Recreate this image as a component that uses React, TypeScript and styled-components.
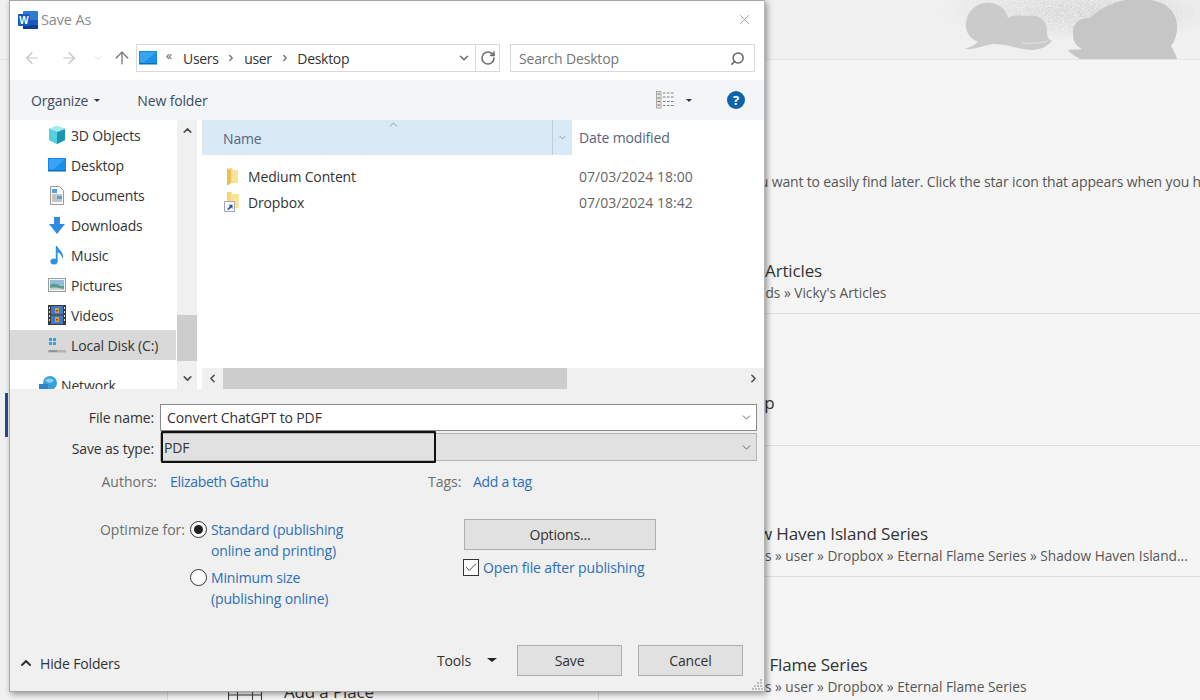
import React from "react";
import styled, { createGlobalStyle } from "styled-components";
import { ArrowLeft, ArrowRight, ArrowUp, ChevronDown, ChevronUp, ChevronLeft, ChevronRight, RotateCw, Search, X, Check } from "lucide-react";

const FONT = `"Open Sans", "Noto Sans", "Liberation Sans", sans-serif`;

const Global = createGlobalStyle`
  html, body { margin: 0; padding: 0; width: 1200px; height: 700px; overflow: hidden; background: #f5f5f5; }
  * { box-sizing: border-box; }
  body { font-family: ${FONT}; font-size: 14px; letter-spacing: -0.15px; color: #333; }
`;

/* ---------- Backstage behind the dialog ---------- */
const Page = styled.div`
  position: relative;
  width: 1200px;
  height: 700px;
  overflow: hidden;
  display: grid;
  grid-template-columns: 168px 431px 1fr;
  grid-template-rows: 60px 1fr;
  background: #f5f5f5;
`;
const Banner = styled.header`
  grid-column: 1 / 4;
  background: #f0f0f0;
  border-bottom: 1px solid #e4e4e4;
  display: flex;
  justify-content: flex-end;
  overflow: hidden;
`;
const NavColumn = styled.nav`
  border-right: 1px solid #d9d9d9;
  padding-top: 333px;
  padding-left: 5px;
  background: #f0f0f0;
`;
const NavAccent = styled.div`
  width: 3px;
  height: 44px;
  background: #1f4e8c;
`;
const PlacesColumn = styled.section`
  border-right: 1px solid #d9d9d9;
  padding: 620px 0 0 60px;
  display: flex;
  gap: 21px;
  align-items: flex-start;
  svg { margin-top: 12px; flex: none; }
`;
const PlaceLabel = styled.span`
  font-size: 17px;
  line-height: 24px;
  color: #333;
  white-space: nowrap;
`;
const FilesColumn = styled.section`
  display: flex;
  flex-direction: column;
  overflow: hidden;
`;
const Intro = styled.p`
  margin: 0;
  height: 133px;
  flex: none;
  padding: 111px 0 0 93px;
  font-size: 14px;
  line-height: 22px;
  color: #555;
  white-space: nowrap;
`;
const FileRow = styled.div<{ $h: number; $pad?: number }>`
  height: ${(p) => p.$h}px;
  flex: none;
  border-bottom: 1px solid #dcdcdc;
  padding-left: 111px;
  display: flex;
  flex-direction: column;
  justify-content: flex-end;
  padding-bottom: ${(p) => p.$pad ?? 10}px;
  white-space: nowrap;
`;
const FileTitle = styled.div`
  font-size: 17px;
  line-height: 24px;
  color: #333;
`;
const FilePath = styled.div`
  font-size: 13.7px;
  line-height: 20px;
  letter-spacing: 0;
  margin-left: -1px;
  color: #555;
`;

/* ---------- Dialog window ---------- */
const Dialog = styled.div`
  position: absolute;
  left: 9px;
  top: 0;
  width: 756px;
  height: 692px;
  background: #fff;
  border: 1px solid #a6a6a6;
  border-right-color: #b5b5b5;
  box-shadow: 2px 2px 6px rgba(0, 0, 0, 0.4);
  display: flex;
  flex-direction: column;
`;
const TitleBar = styled.div`
  height: 39px;
  flex: none;
  display: flex;
  align-items: center;
  padding: 0 11px 2px 8px;
  gap: 3px;
`;
const TitleText = styled.span`
  font-size: 14.5px;
  color: #8c8c8c;
  flex: 1;
`;
const NavBar = styled.div`
  height: 40px;
  flex: none;
  display: flex;
  align-items: flex-start;
  padding: 4px 9px 0 0;
`;
const NavButtons = styled.div`
  width: 126px;
  height: 28px;
  flex: none;
  display: flex;
  align-items: center;
  padding-left: 13px;
  color: #c4c4c4;
`;
const NavGap = styled.span<{ $w: number }>`
  display: block;
  width: ${(p) => p.$w}px;
  flex: none;
`;
const Address = styled.div`
  width: 364px;
  height: 28px;
  flex: none;
  border: 1px solid #d9d9d9;
  display: flex;
  align-items: center;
  padding-left: 2px;
  color: #333;
`;
const Crumb = styled.span`
  font-size: 14px;
  letter-spacing: -0.3px;
  color: #333;
`;
const CrumbSep = styled.span`
  display: flex;
  width: 25.5px;
  justify-content: center;
  color: #6d6d6d;
`;
const Chevrons = styled.span`
  font-size: 12px;
  line-height: 12px;
  color: #555;
  width: 26px;
  padding-left: 9px;
  margin-top: -5px;
`;
const AddressEnd = styled.div`
  margin-left: auto;
  height: 100%;
  display: flex;
  align-items: center;
  color: #6e6e6e;
`;
const RefreshCell = styled.div`
  width: 24px;
  height: 100%;
  border-left: 1px solid #d9d9d9;
  margin-left: 4px;
  display: flex;
  align-items: center;
  justify-content: center;
`;
const SearchBox = styled.div`
  width: 245px;
  height: 28px;
  flex: none;
  margin-left: 10px;
  border: 1px solid #d9d9d9;
  display: flex;
  align-items: center;
  justify-content: space-between;
  padding: 0 9px 0 8px;
  font-size: 14px;
  color: #757575;
  svg { transform: scaleX(-1); color: #666; }
`;
const Toolbar = styled.div`
  height: 40px;
  flex: none;
  background: #f4f5f7;
  display: flex;
  align-items: center;
  padding: 0 19px 0 21px;
  font-size: 14px;
  color: #3b4c63;
`;
const ToolbarItem = styled.span`
  display: flex;
  align-items: center;
  gap: 6px;
  margin-right: 37px;
`;
const Caret = styled.span<{ $color?: string; $w?: number }>`
  display: inline-block;
  width: 0;
  height: 0;
  border-left: ${(p) => p.$w ?? 3.5}px solid transparent;
  border-right: ${(p) => p.$w ?? 3.5}px solid transparent;
  border-top: ${(p) => (p.$w ?? 3.5) * 0.9}px solid ${(p) => p.$color ?? "#2a3a55"};
`;
const ToolbarEnd = styled.div`
  margin-left: auto;
  display: flex;
  align-items: center;
`;
const HelpBadge = styled.span`
  width: 18px;
  height: 18px;
  border-radius: 50%;
  background: #0f62ac;
  color: #fff;
  font-size: 13px;
  font-weight: 700;
  line-height: 18px;
  text-align: center;
  margin-left: 35px;
`;

/* ---------- Browser pane ---------- */
const Pane = styled.div`
  height: 269px;
  flex: none;
  display: flex;
`;
const Sidebar = styled.div`
  width: 167px;
  flex: none;
  overflow: hidden;
`;
const SideItem = styled.div<{ $selected?: boolean; $net?: boolean }>`
  height: 30px;
  display: flex;
  align-items: center;
  gap: ${(p) => (p.$net ? 4 : 5)}px;
  padding-left: ${(p) => (p.$net ? 29 : 38)}px;
  margin-top: ${(p) => (p.$net ? 10 : 0)}px;
  width: 166px;
  background: ${(p) => (p.$selected ? "#d9d9d9" : "transparent")};
  font-size: 14px;
  color: #333;
  white-space: nowrap;
`;
const IconSlot = styled.span`
  width: 18px;
  flex: none;
  display: flex;
  justify-content: center;
  align-items: center;
`;
const VScroll = styled.div`
  width: 20px;
  flex: none;
  background: #f0f0f0;
  display: flex;
  flex-direction: column;
  align-items: center;
  color: #505050;
`;
const VArrow = styled.div`
  height: 21px;
  display: flex;
  align-items: center;
  justify-content: center;
  flex: none;
`;
const VTrack = styled.div`
  flex: 1;
  width: 100%;
  padding-top: 174px;
`;
const VThumb = styled.div`
  height: 46px;
  background: #cdcdcd;
`;
const Main = styled.div`
  margin-left: 5px;
  flex: 1;
  display: flex;
  flex-direction: column;
  min-width: 0;
`;
const HeaderRow = styled.div`
  height: 35px;
  flex: none;
  display: flex;
  position: relative;
  font-size: 14px;
  color: #56657e;
`;
const NameHead = styled.div`
  width: 350px;
  background: #d9e9f6;
  padding: 9px 0 0 21px;
`;
const HeadDrop = styled.div`
  width: 20px;
  background: #d9e9f6;
  border-left: 1px solid #b9cfe2;
  display: flex;
  align-items: center;
  justify-content: center;
  color: #5b6f86;
`;
const DateHead = styled.div`
  padding: 8px 0 0 7px;
`;
const SortMark = styled.span`
  position: absolute;
  left: 185px;
  top: -2px;
  display: flex;
  color: #7d8794;
`;
const FileList = styled.div`
  flex: 1;
  padding-top: 9px;
`;
const ListRow = styled.div`
  height: 25.5px;
  display: grid;
  grid-template-columns: 377px 1fr;
  align-items: center;
`;
const NameCell = styled.div`
  display: flex;
  align-items: center;
  padding-left: 22px;
  font-size: 14px;
  color: #333;
`;
const FileIconSlot = styled.span`
  width: 24px;
  flex: none;
  display: flex;
`;
const DateCell = styled.div`
  font-size: 14px;
  letter-spacing: 0;
  color: #666;
`;
const HScroll = styled.div`
  height: 21px;
  flex: none;
  display: flex;
  background: #f0f0f0;
  color: #505050;
`;
const HArrow = styled.div`
  width: 21px;
  flex: none;
  display: flex;
  align-items: center;
  justify-content: center;
`;
const HTrack = styled.div`
  flex: 1;
`;
const HThumb = styled.div`
  width: 344px;
  height: 100%;
  background: #cdcdcd;
`;

/* ---------- Form ---------- */
const Lower = styled.div`
  flex: 1;
  background: #f0f0f0;
  display: flex;
  flex-direction: column;
  position: relative;
  padding-top: 15px;
`;
const FieldRow = styled.div<{ $gap?: number }>`
  display: flex;
  align-items: center;
  margin-top: ${(p) => p.$gap ?? 0}px;
  padding-right: 7px;
`;
const FieldLabel = styled.label<{ $shift?: number }>`
  width: 144px;
  margin-right: 6px;
  padding-top: ${(p) => p.$shift ?? 0}px;
  text-align: right;
  font-size: 14px;
  color: #333;
  flex: none;
`;
const Field = styled.div<{ $shaded?: boolean }>`
  flex: 1;
  position: relative;
  height: ${(p) => (p.$shaded ? 28 : 27)}px;
  background: ${(p) => (p.$shaded ? "#e1e1e1" : "#fff")};
  border: 1px solid ${(p) => (p.$shaded ? "#b4b4b4" : "#8a8a8a")};
  display: flex;
  align-items: center;
  justify-content: space-between;
  padding: ${(p) => (p.$shaded ? 1 : 0)}px 3px 0 ${(p) => (p.$shaded ? 3 : 6)}px;
  font-size: 14px;
  color: #333;
  svg { color: #505050; }
`;
const Highlight = styled.span`
  position: absolute;
  left: 0;
  top: -3px;
  width: 275px;
  height: 32px;
  border: 2px solid #111;
  border-radius: 1px;
`;
const MetaRow = styled.div`
  display: grid;
  grid-template-columns: 147px 271px 45px 1fr;
  margin-top: 10px;
  height: 20px;
  align-items: center;
  font-size: 14px;
`;
const MetaLabel = styled.span<{ $right?: boolean }>`
  color: #6d6d6d;
  letter-spacing: 0;
  text-align: ${(p) => (p.$right ? "right" : "left")};
`;
const MetaValue = styled.span<{ $indent?: number }>`
  color: #2b6fb8;
  letter-spacing: -0.3px;
  padding-left: ${(p) => p.$indent ?? 0}px;
`;
const OptionsArea = styled.div`
  display: grid;
  grid-template-columns: 454px 1fr;
  margin-top: 28px;
`;
const OptimizeGroup = styled.div`
  display: flex;
  align-items: flex-start;
`;
const OptimizeLabel = styled.span`
  width: 175px;
  flex: none;
  text-align: right;
  font-size: 14px;
  line-height: 21px;
  letter-spacing: 0;
  color: #6d6d6d;
`;
const RadioList = styled.div`
  margin-left: 5px;
  display: flex;
  flex-direction: column;
  gap: 6px;
`;
const RadioItem = styled.div`
  display: flex;
  gap: 4px;
  align-items: flex-start;
  font-size: 14px;
  line-height: 21px;
  color: #2b6fb8;
`;
const Radio = styled.span<{ $on?: boolean }>`
  width: 17px;
  height: 17px;
  margin-top: 2px;
  border-radius: 50%;
  border: 1px solid #333;
  background: #fff;
  display: flex;
  align-items: center;
  justify-content: center;
  flex: none;
  &::after {
    content: "";
    display: ${(p) => (p.$on ? "block" : "none")};
    width: 9px;
    height: 9px;
    border-radius: 50%;
    background: #222;
  }
`;
const ActionColumn = styled.div`
  display: flex;
  flex-direction: column;
  align-items: flex-start;
`;
const DialogButton = styled.button<{ $w: number }>`
  width: ${(p) => p.$w}px;
  height: 31px;
  padding: 0;
  background: #e1e1e1;
  border: 1px solid #adadad;
  font-family: ${FONT};
  font-size: 14px;
  letter-spacing: -0.15px;
  color: #333;
`;
const CheckRow = styled.div`
  display: flex;
  align-items: center;
  gap: 4px;
  margin-top: 8px;
  margin-left: -1px;
  font-size: 14px;
  color: #2b6fb8;
`;
const CheckBox = styled.span`
  width: 16px;
  height: 17px;
  border: 1px solid #333;
  background: #fff;
  display: flex;
  align-items: center;
  justify-content: center;
  color: #333;
`;
const Footer = styled.div`
  margin-top: auto;
  height: 30px;
  margin-bottom: 16px;
  padding: 0 21px 0 8px;
  display: flex;
  align-items: center;
  font-size: 14px;
  color: #333;
`;
const HideFolders = styled.span`
  display: flex;
  align-items: center;
  gap: 6px;
  margin-top: 6px;
  color: #333;
`;
const ToolsGroup = styled.div`
  margin-left: auto;
  display: flex;
  align-items: center;
`;
const ToolsMenu = styled.span`
  display: flex;
  align-items: center;
  gap: 16px;
  margin-right: 20px;
`;
const Grip = styled.span`
  position: absolute;
  right: 1px;
  bottom: 1px;
  display: flex;
`;

/* ---------- Drawn icons ---------- */
const WordIcon = () => (
  <svg width="20" height="20" viewBox="0 0 20 20">
    <rect x="5" y="1" width="15" height="18" rx="1" fill="#2b7cd3" />
    <rect x="5" y="10" width="15" height="5" fill="#185abd" />
    <rect x="5" y="15" width="15" height="4" fill="#103f91" />
    <rect x="0" y="4" width="12" height="12" rx="1" fill="#185abd" />
    <text x="6" y="13.500" fontSize="10" fontWeight="700" fontFamily="Liberation Sans, sans-serif" fill="#fff" textAnchor="middle">W</text>
  </svg>
);
const MonitorIcon = () => (
  <svg width="18" height="14" viewBox="0 0 18 14">
    <rect x="0" y="0" width="18" height="13" fill="#1287e6" />
    <rect x="1" y="1" width="16" height="10.5" fill="#3ba4f2" />
    <path d="M17 1v10.500H5z" fill="#1a90ea" />
    <rect x="0" y="12" width="18" height="1.500" fill="#0c6cc0" />
  </svg>
);
const CubeIcon = () => (
  <svg width="18" height="18" viewBox="0 0 18 18">
    <path d="M9 0l8 3v11l-8 4-8-4V3z" fill="#44c7d8" />
    <path d="M9 6l8-3v11l-8 4z" fill="#1f94b0" />
    <path d="M9 0l8 3-8 3-8-3z" fill="#a5e8ef" />
    <path d="M1 3l8 3v12l-8-4z" fill="#52d1dc" />
  </svg>
);
const DocIcon = () => (
  <svg width="14" height="19" viewBox="0 0 14 19">
    <path d="M.5.5h9l4 4v14H.5z" fill="#f8f8f8" stroke="#9a9a9a" />
    <rect x="2" y="3" width="5" height="4" fill="#5aa0dc" />
    <path d="M2 9h10M2 11h10M2 13h10M2 15h10" stroke="#8f8f8f" strokeWidth="1" />
    <rect x="7" y="10" width="5" height="3" fill="#5aa0dc" />
  </svg>
);
const DownIcon = () => (
  <svg width="16" height="17" viewBox="0 0 16 17">
    <path d="M5 0h6v7h5l-8 10L0 7h5z" fill="#2f8ae0" />
  </svg>
);
const MusicIcon = () => (
  <svg width="14" height="19" viewBox="0 0 14 19">
    <ellipse cx="4" cy="15.500" rx="3.600" ry="3" fill="#2a93e4" />
    <path d="M5.800 0h1.500c.3 3 5.700 5 5.700 10.300 0 1-.3 2-.8 2.800.2-3.500-2.900-6-4.600-7V15.500H5.800z" fill="#2a93e4" />
  </svg>
);
const PictureIcon = () => (
  <svg width="18" height="14" viewBox="0 0 18 14">
    <rect x=".5" y=".5" width="17" height="13" fill="#f6f6f6" stroke="#9b9b9b" />
    <rect x="2" y="2" width="14" height="5" fill="#8fbddf" />
    <path d="M2 7c3-2 6-1 9 0s4 .5 5 0v5H2z" fill="#5d9a8c" />
    <path d="M2 10c4-1 9 0 14 1v1H2z" fill="#c5d6cf" />
  </svg>
);
const FilmIcon = () => (
  <svg width="18" height="20" viewBox="0 0 18 20">
    <rect width="18" height="20" fill="#3a3a3a" />
    <rect x="3" y="1" width="12" height="8.500" fill="#3f77c9" />
    <rect x="3" y="10.500" width="12" height="8.500" fill="#3f77c9" />
    <path d="M7 3h4v5H7zM7 12h4v5H7z" fill="#d5a429" />
    <path d="M8 5h2v1.500H8zM8 14h2v1.500H8z" fill="#b63b2d" />
    <path d="M1 2h1v2H1zM1 6h1v2H1zM1 10h1v2H1zM1 14h1v2H1zM16 2h1v2h-1zM16 6h1v2h-1zM16 10h1v2h-1zM16 14h1v2h-1z" fill="#ddd" />
  </svg>
);
const DiskIcon = () => (
  <svg width="18" height="16" viewBox="0 0 18 16">
    <path d="M1 1h3v3H1zM5 1h3v3H5zM1 5h3v3H1zM5 5h3v3H5z" fill="#27a9e5" />
    <path d="M0 13l4-4h10l4 4v2.500H0z" fill="#d8d8d8" />
    <path d="M0 13h18v2.500H0z" fill="#b3b3b3" />
    <rect x="1" y="13.500" width="8" height="1" fill="#777" />
  </svg>
);
const NetworkIcon = () => (
  <svg width="18" height="18" viewBox="0 0 18 18">
    <circle cx="11" cy="7" r="7" fill="#3aa0d8" />
    <path d="M6 4c3-2 6-2 9 0-1 3-7 4-9 0z" fill="#8fd0ef" />
    <rect x="0" y="8" width="9" height="8" fill="#2f82c9" />
  </svg>
);
const FolderIcon = () => (
  <svg width="15" height="17" viewBox="0 0 15 17">
    <path d="M3 1l1-.8h4l1 1.800h5v13H6l-2 2-1-.5z" fill="#f9d878" />
    <path d="M7 2h7v13H7z" fill="#fbe39a" />
    <path d="M3 1l4 1v13l-3 2h-1z" fill="#efc04f" />
  </svg>
);
const ShortcutIcon = () => (
  <svg width="16" height="20" viewBox="0 0 16 20">
    <path d="M3 0h4l1 2h6.500v14H6l-2 2-1-.5z" fill="#f7d676" />
    <path d="M7 2h7.500v14H7z" fill="#fbe39a" />
    <rect x=".5" y="9.500" width="10" height="10" fill="#fafafa" stroke="#a8a8a8" />
    <path d="M3 17.500l3-3.500-1.500-1.200H8.500V17l-1.200-1.400L5 17.800z" fill="#1a56b0" />
  </svg>
);
const ViewIcon = () => (
  <svg width="18" height="18" viewBox="0 0 18 18" fill="none">
    <rect x=".5" y=".5" width="4.500" height="16.500" fill="#e8e8e8" stroke="#a8a8a8" />
    <path d="M1.500 3h2.500M1.500 7h2.500" stroke="#666" />
    <path d="M1.500 10.500h2.500" stroke="#c0392b" />
    <path d="M1.500 14h2.500" stroke="#666" />
    <path d="M7 2h2.500M11 2h2.500M15 2h2.500M7 6h2.500M11 6h2.500M15 6h2.500M7 10.500h2.500M11 10.500h2.500M15 10.500h2.500M7 14.500h2.500M11 14.500h2.500M15 14.500h2.500" stroke="#7d7d7d" />
  </svg>
);
const PlaceIcon = () => (
  <svg width="35" height="8" viewBox="0 0 35 8" fill="none" stroke="#444" strokeWidth="1.100">
    <path d="M.5 0v8M9.500 0v8M24.500 0v8M33.500 0v8M.5 3h33" />
  </svg>
);
const GripIcon = () => (
  <svg width="11" height="11" viewBox="0 0 11 11" fill="#bdbdbd">
    <path d="M8 0h2v2H8zM5 3h2v2H5zM8 3h2v2H8zM2 6h2v2H2zM5 6h2v2H5zM8 6h2v2H8zM0 9h2v2H0zM3 9h2v2H3zM6 9h2v2H6zM9 9h2v2H9z" />
  </svg>
);
const BannerArt = () => (
  <svg width="290" height="59" viewBox="910 0 290 59">
    <defs>
      <radialGradient id="glow" cx="0.6" cy="0.2" r="0.5">
        <stop offset="0" stopColor="#d4d4d4" />
        <stop offset="0.6" stopColor="#e2e2e2" />
        <stop offset="1" stopColor="#f0f0f0" />
      </radialGradient>
      <filter id="grain" x="0" y="0" width="100%" height="100%" colorInterpolationFilters="sRGB">
        <feTurbulence type="fractalNoise" baseFrequency="1.1" numOctaves="2" seed="4" />
        <feColorMatrix values="0 0 0 0 0.941  0 0 0 0 0.941  0 0 0 0 0.941  3 0 0 0 -1.2" />
      </filter>
    </defs>
    <rect x="910" y="0" width="290" height="59" fill="url(#glow)" />
    <rect x="910" y="0" width="290" height="59" filter="url(#grain)" />
    <path d="M978 42C968 38 965 30 966 22C968 8 980 1 992 3C1001 5 1006 10 1008 18C1014 14 1022 16 1027 16C1038 14 1047 20 1047 30C1047 34 1046 38 1052 41C1048 46 1040 50 1032 50C1020 50 1005 43 993 44C984 45 975 50 965 49C970 47 975 45 978 42Z" fill="#cbcbcb" />
    <path d="M1022 43C1032 44 1042 43 1048 41" stroke="#e2e2e2" strokeWidth="1.200" fill="none" />
    <path d="M1073 35C1072 24 1078 18 1090 18C1098 10 1110 3 1125 0L1150 0C1168 2 1178 14 1177 28C1177 36 1174 42 1171 46C1173 50 1176 54 1177 59L1080 59C1075 56 1070 53 1068 50C1072 49 1078 50 1082 49C1076 46 1073 41 1073 35Z" fill="#c6c6c6" />
  </svg>
);

const places = [
  { icon: <CubeIcon />, label: "3D Objects" },
  { icon: <MonitorIcon />, label: "Desktop" },
  { icon: <DocIcon />, label: "Documents" },
  { icon: <DownIcon />, label: "Downloads" },
  { icon: <MusicIcon />, label: "Music" },
  { icon: <PictureIcon />, label: "Pictures" },
  { icon: <FilmIcon />, label: "Videos" },
];

export default function App() {
  return (
    <Page>
      <Global />
      <Banner>
        <BannerArt />
      </Banner>
      <NavColumn>
        <NavAccent />
      </NavColumn>
      <PlacesColumn>
        <PlaceIcon />
        <PlaceLabel>Add a Place</PlaceLabel>
      </PlacesColumn>
      <FilesColumn>
        <Intro>Pin files you want to easily find later. Click the star icon that appears when you hover over a file.</Intro>
        <FileRow $h={121}>
          <FileTitle>Vicky's Articles</FileTitle>
          <FilePath>Downloads » Vicky's Articles</FilePath>
        </FileRow>
        <FileRow $h={132} $pad={30}>
          <FileTitle>Desktop</FileTitle>
        </FileRow>
        <FileRow $h={131}>
          <FileTitle>Shadow Haven Island Series</FileTitle>
          <FilePath>C: » Users » user » Dropbox » Eternal Flame Series » Shadow Haven Island...</FilePath>
        </FileRow>
        <FileRow $h={131}>
          <FileTitle>Eternal Flame Series</FileTitle>
          <FilePath>C: » Users » user » Dropbox » Eternal Flame Series</FilePath>
        </FileRow>
      </FilesColumn>

      <Dialog>
        <TitleBar>
          <WordIcon />
          <TitleText>Save As</TitleText>
          <X size={17} strokeWidth={1} color="#8a8a8a" />
        </TitleBar>
        <NavBar>
          <NavButtons>
            <ArrowLeft size={18} strokeWidth={1.6} />
            <NavGap $w={19} />
            <ArrowRight size={18} strokeWidth={1.6} />
            <NavGap $w={15} />
            <ChevronDown size={10} strokeWidth={1.6} />
            <NavGap $w={9} />
            <ArrowUp size={20} strokeWidth={1.4} color="#666" />
          </NavButtons>
          <Address>
            <MonitorIcon />
            <Chevrons>«</Chevrons>
            <Crumb>Users</Crumb>
            <CrumbSep><ChevronRight size={10} strokeWidth={3} /></CrumbSep>
            <Crumb>user</Crumb>
            <CrumbSep><ChevronRight size={10} strokeWidth={3} /></CrumbSep>
            <Crumb>Desktop</Crumb>
            <AddressEnd>
              <ChevronDown size={14} strokeWidth={2.6} />
              <RefreshCell><RotateCw size={16} strokeWidth={2.4} /></RefreshCell>
            </AddressEnd>
          </Address>
          <SearchBox>
            Search Desktop
            <Search size={15} strokeWidth={2.4} />
          </SearchBox>
        </NavBar>
        <Toolbar>
          <ToolbarItem>Organize <Caret /></ToolbarItem>
          <ToolbarItem>New folder</ToolbarItem>
          <ToolbarEnd>
            <ViewIcon />
            <NavGap $w={12} />
            <Caret />
            <HelpBadge>?</HelpBadge>
          </ToolbarEnd>
        </Toolbar>
        <Pane>
          <Sidebar>
            {places.map((p) => (
              <SideItem key={p.label}><IconSlot>{p.icon}</IconSlot>{p.label}</SideItem>
            ))}
            <SideItem $selected><IconSlot><DiskIcon /></IconSlot>Local Disk (C:)</SideItem>
            <SideItem $net><IconSlot><NetworkIcon /></IconSlot>Network</SideItem>
          </Sidebar>
          <VScroll>
            <VArrow><ChevronUp size={13} strokeWidth={3} /></VArrow>
            <VTrack><VThumb /></VTrack>
            <VArrow><ChevronDown size={13} strokeWidth={3} /></VArrow>
          </VScroll>
          <Main>
            <HeaderRow>
              <NameHead>Name</NameHead>
              <HeadDrop><ChevronDown size={11} strokeWidth={1.4} /></HeadDrop>
              <DateHead>Date modified</DateHead>
              <SortMark><ChevronUp size={13} strokeWidth={1.4} /></SortMark>
            </HeaderRow>
            <FileList>
              <ListRow>
                <NameCell><FileIconSlot><FolderIcon /></FileIconSlot>Medium Content</NameCell>
                <DateCell>07/03/2024 18:00</DateCell>
              </ListRow>
              <ListRow>
                <NameCell><FileIconSlot><ShortcutIcon /></FileIconSlot>Dropbox</NameCell>
                <DateCell>07/03/2024 18:42</DateCell>
              </ListRow>
            </FileList>
            <HScroll>
              <HArrow><ChevronLeft size={13} strokeWidth={3} /></HArrow>
              <HTrack><HThumb /></HTrack>
              <HArrow><ChevronRight size={13} strokeWidth={3} /></HArrow>
            </HScroll>
          </Main>
        </Pane>
        <Lower>
          <FieldRow>
            <FieldLabel>File name:</FieldLabel>
            <Field>
              Convert ChatGPT to PDF
              <ChevronDown size={13} strokeWidth={1.6} />
            </Field>
          </FieldRow>
          <FieldRow $gap={2}>
            <FieldLabel $shift={2}>Save as type:</FieldLabel>
            <Field $shaded>
              PDF
              <ChevronDown size={13} strokeWidth={1.6} />
              <Highlight />
            </Field>
          </FieldRow>
          <MetaRow>
            <MetaLabel $right>Authors:</MetaLabel>
            <MetaValue $indent={13}>Elizabeth Gathu</MetaValue>
            <MetaLabel>Tags:</MetaLabel>
            <MetaValue>Add a tag</MetaValue>
          </MetaRow>
          <OptionsArea>
            <OptimizeGroup>
              <OptimizeLabel>Optimize for:</OptimizeLabel>
              <RadioList>
                <RadioItem>
                  <Radio $on />
                  <span>Standard (publishing<br />online and printing)</span>
                </RadioItem>
                <RadioItem>
                  <Radio />
                  <span>Minimum size<br />(publishing online)</span>
                </RadioItem>
              </RadioList>
            </OptimizeGroup>
            <ActionColumn>
              <DialogButton $w={192}>Options...</DialogButton>
              <CheckRow>
                <CheckBox><Check size={15} strokeWidth={1.6} /></CheckBox>
                Open file after publishing
              </CheckRow>
            </ActionColumn>
          </OptionsArea>
          <Footer>
            <HideFolders><ChevronUp size={16} strokeWidth={3} />Hide Folders</HideFolders>
            <ToolsGroup>
              <ToolsMenu>Tools <Caret $color="#222" $w={5} /></ToolsMenu>
              <DialogButton $w={105}>Save</DialogButton>
              <NavGap $w={16} />
              <DialogButton $w={105}>Cancel</DialogButton>
            </ToolsGroup>
          </Footer>
          <Grip><GripIcon /></Grip>
        </Lower>
      </Dialog>
    </Page>
  );
}
